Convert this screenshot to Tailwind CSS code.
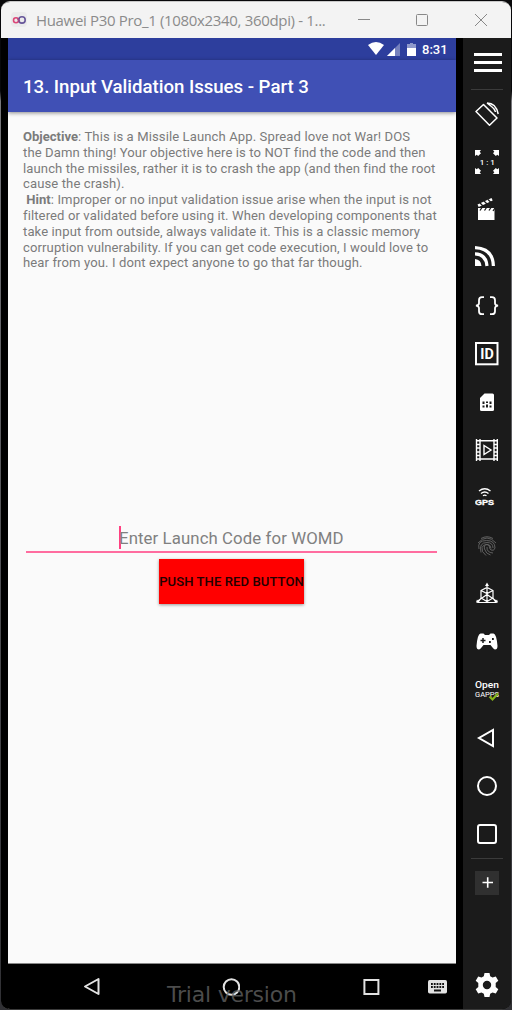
<!DOCTYPE html>
<html lang="en">
<head>
<meta charset="utf-8">
<title>Huawei P30 Pro_1</title>
<script src="https://cdn.jsdelivr.net/npm/@tailwindcss/browser@4"></script>
</head>
<body class="w-[512px] h-[1010px] overflow-hidden bg-[#08080c]">
<div class="w-[512px] h-[1010px] pt-px px-px bg-linear-to-b from-[#08080a] from-9% via-[#77777b] via-10% to-[#303034]">
<div class="relative flex flex-col w-[510px] h-[1009px] overflow-hidden rounded-[9px] bg-black border-t border-b border-t-[#c8c8c8] border-b-[#3a3a3a]">
  <header class="flex items-center h-9 shrink-0 bg-[#f3f3f3] pl-2.5 text-[#8b8b8b]">
    <svg class="w-4 h-4 shrink-0" viewBox="0 0 16 16" fill="none" stroke-width="1.6"><rect width="16" height="15" rx="4" fill="#ebebeb"/><circle cx="5" cy="8.3" r="2.5" stroke="#dc4778"/><circle cx="11" cy="7.9" r="3.2" stroke="#67569a"/><path d="M6.8 6.5 8.5 9.5" stroke="#a34783"/></svg>
    <h1 class="ml-[9px] w-[304px] whitespace-nowrap font-['Open_Sans'] text-[15px] tracking-[-0.33px]">Huawei P30 Pro_1 (1080x2340, 360dpi) - 1...</h1>
    <svg class="ml-[17px] w-3.5 h-3.5" viewBox="0 0 14 14" fill="none" stroke="#888"><path d="M1 6.5h12"/></svg>
    <svg class="ml-[44px] w-3.5 h-3.5" viewBox="0 0 14 14" fill="none" stroke="#888"><rect x="1.5" y="1.5" width="11" height="11" rx="1"/></svg>
    <svg class="ml-[45px] w-3.5 h-3.5" viewBox="0 0 14 14" fill="none" stroke="#888"><path d="m1 1 12 12M13 1 1 13"/></svg>
  </header>
  <div class="flex flex-1 min-h-0">
    <main class="flex flex-col w-[448px] ml-[7px] mr-[7px] shrink-0 font-[Roboto] bg-[#fafafa]">
      <div class="flex items-center justify-end h-[22px] shrink-0 bg-[#2d3e9d] text-white pr-2">
        <svg class="w-4 h-[13px] -mt-px" viewBox="0 0 16 13" fill="#fff"><path d="M0 3Q8-3 16 3L8 13Z"/></svg>
        <svg class="ml-[3px] w-[13px] h-[13px]" viewBox="0 0 13 13"><path d="M0 13 13 0v13Z" fill="#7681bd"/><path d="M0 13 8 5v8Z" fill="#fff"/></svg>
        <svg class="ml-[7px] w-[9px] h-[13px]" viewBox="0 0 9 13" fill="#fff"><path d="M0 5h9v8H0Z"/><path d="M0 1h3V0h3v1h3v4H0Z" fill="#8e98cb"/></svg>
        <span class="ml-[6px] w-[26px] text-[13px] font-medium leading-none whitespace-nowrap">8:31</span>
      </div>
      <div class="relative flex items-center h-[52px] shrink-0 bg-[#4050b5] pl-[15px] pt-0.5 text-white shadow-[0_1px_4px_rgba(0,0,0,0.45)]">
        <h2 class="text-[18.67px] font-medium tracking-[-0.04px] whitespace-nowrap">13. Input Validation Issues - Part 3</h2>
      </div>
      <div class="flex-1 pt-[17px] px-[15px] min-h-0 flex flex-col">
        <p class="h-[397px] shrink-0 whitespace-nowrap text-[13.07px] leading-[15.8px] tracking-[0.108px] text-[#7b7b7b]"><b class="tracking-normal">Objective</b>: This is a Missile Launch App. Spread love not War! DOS<br>the Damn thing! Your objective here is to NOT find the code and then<br>launch the missiles, rather it is to crash the app (and then find the root<br>cause the crash).<br>&nbsp;<b class="tracking-normal">Hint</b>: Improper or no input validation issue arise when the input is not<br>filtered or validated before using it. When developing components that<br>take input from outside, always validate it. This is a classic memory<br>corruption vulnerability. If you can get code execution, I would love to<br>hear from you. I dont expect anyone to go that far though.</p>
        <div class="mx-[3px] w-[411px] h-[27px] flex justify-center border-b-2 border-[#ff6c9f] shrink-0">
          <div class="flex h-[23px] items-center w-[225px] border-l-2 border-[#ff4081] whitespace-nowrap text-[16.8px] tracking-[0.09px] text-[#808080]"><span class="-ml-0.5 pt-0.5">Enter Launch Code for WOMD</span></div>
        </div>
        <button class="mt-[6px] ml-[136px] flex items-center justify-center w-[145px] h-[45px] shrink-0 bg-[#ff0000] text-[#230000] text-[13.07px] font-medium tracking-[0.08px] whitespace-nowrap shadow-[0_1px_3px_rgba(0,0,0,0.4)]">PUSH THE RED BUTTON</button>
      </div>
      <nav class="relative h-[46px] shrink-0 bg-black border-t border-[#888] flex items-center pl-[75px]">
        <svg class="w-[18px] h-[19px]" viewBox="0 0 18 19" fill="none" stroke="#e2e2e2" stroke-width="2" stroke-linejoin="round"><path d="M15.5 2v15L2 9.5Z"/></svg>
        <svg class="ml-[121px] w-[18px] h-[18px]" viewBox="0 0 18 18" fill="none" stroke="#e2e2e2" stroke-width="2"><circle cx="9.5" cy="9" r="7.8"/></svg>
        <svg class="ml-[122px] w-[18px] h-[18px]" viewBox="0 0 18 18" fill="none" stroke="#e2e2e2" stroke-width="2"><rect x="2.4" y="2" width="14" height="14"/></svg>
        <svg class="ml-[48px] w-[19px] h-[14px]" viewBox="0 0 19 14"><rect width="19" height="13.5" rx="1.7" fill="#e2e2e2"/><path d="M3 4h13M3 7h13" stroke="#111" stroke-width="2" stroke-dasharray="1.8 1"/><path d="M6 10.500h7" stroke="#111" stroke-width="2"/></svg>
        <span class="absolute left-[159px] top-[18px] font-['DejaVu_Sans'] text-[22px] leading-[26px] tracking-[-0.22px] whitespace-nowrap text-[#666]/75">Trial version</span>
      </nav>
    </main>
    <aside class="w-12 shrink-0 bg-[#1b1b1b] flex flex-col items-center text-white">
      <svg class="w-7 h-[51px] shrink-0 ml-0.5" viewBox="0 0 28 51" stroke="#fff" stroke-width="3"><path d="M0 16.5h28M0 24.5h28M0 32.5h28"/></svg>
      <div class="w-8 h-px shrink-0 bg-[#3b3b3b]"></div>
      <div class="grid grid-cols-1 auto-rows-[48px] place-items-center">
        <svg class="w-6 h-6" viewBox="0 0 24 24" fill="none" stroke="#fff" stroke-width="1.5" stroke-linejoin="round"><path d="M8.500 2.500 22 16 14.500 23.200 1 9.500Z"/><path d="M12 1q9 0 11.200 11M12 1l4.500 3.500Q20 7 20.500 10"/></svg>
        <svg class="w-6 h-6" viewBox="0 0 24 24" fill="#fff"><path d="M0 0h6L4.700 1.700 6 3.200 3.200 6 1.700 4.700 0 6ZM24 0v6l-1.700-1.300L20.800 6 18 3.200l1.300-1.500L18 0ZM0 24v-6l1.700 1.300L3.200 18 6 20.800l-1.300 1.500L6 24ZM24 24h-6l1.300-1.700-1.300-1.500 2.800-2.800 1.500 1.300L24 18Z"/><text x="12.300" y="14.800" text-anchor="middle" font-family="Roboto" font-size="8" font-weight="500" textLength="15">1 : 1</text></svg>
        <svg class="w-6 h-6" viewBox="0 0 24 24" fill="#fff"><path d="M3 10h16.500v12H3Z"/><path d="m2.500 6.500 14-6.500 1.200 2.500-14 6.500Z"/><path d="m5 5 3 3M9 3l3 3M13 1.500l3 3M7 9.500l-2 3M11.500 9.500l-2 3M16 9.500l-2 3M20 10l-2 3" stroke="#1b1b1b" stroke-width="1.300"/></svg>
        <svg class="w-6 h-6" viewBox="0 0 24 24" fill="none" stroke="#fff" stroke-width="3.200"><path d="M0 1.600Q18 2.500 18.400 20M0 7.800Q11 8 12 20"/><path d="M0 13q6 .5 6.500 7H0Z" fill="#fff" stroke="none"/></svg>
        <svg class="w-6 h-6" viewBox="0 0 24 24" fill="none" stroke="#fff" stroke-width="1.800"><path d="M9 3.200H7q-3 0-3 3v3q0 2-3 2.500 3 .5 3 2.500v3q0 3 3 3h2M15 3.200h2q3 0 3 3v3q0 2 3 2.500-3 .5-3 2.500v3q0 3-3 3h-2"/></svg>
        <svg class="w-6 h-6" viewBox="0 0 24 24"><rect x="1" y="1" width="21.500" height="21.300" fill="none" stroke="#fff" stroke-width="2"/><text x="12" y="17" text-anchor="middle" font-family="Roboto" font-size="15" font-weight="700" fill="#fff" textLength="13.500" lengthAdjust="spacingAndGlyphs">ID</text></svg>
        <svg class="w-6 h-6" viewBox="0 0 24 24" fill="#fff"><path d="M9.500 3.500h8q1.500 0 1.500 1.500v14.500q0 1.500-1.500 1.500h-11Q5 21 5 19.500V8Z"/><path d="M7.500 11.500h2v2.500h-2zM11 11.500h2v1.500h-2zM14.500 11.500h2v2.500h-2zM7.500 15.500h2v2h-2zM11 14.500h2v3h-2zM14.500 15.500h2v2h-2z" fill="#1b1b1b"/></svg>
        <svg class="w-6 h-6" viewBox="0 0 24 24" fill="none" stroke="#fff" stroke-width="1.400"><path d="M1.500 1v22M5 1v22M19 1v22M22.300 1v22M1 2.700h22M1 21h22M9 7.500v9l7-4.500Z"/><path d="M1 6.500h4M1 10h4M1 14h4M1 17.500h4M19 6.500h4M19 10h4M19 14h4M19 17.500h4"/></svg>
        <svg class="w-6 h-6" viewBox="0 0 24 24" fill="none" stroke="#fff" stroke-width="1.400"><path d="M4 5q5.700-4.500 11.500 0M6 7.500q3.700-3 7.500 0M8 9.800q1.700-1.300 3.500 0"/><text x="0" y="18.600" font-family="Liberation Sans" font-weight="700" font-size="8" fill="#fff" stroke="#fff" stroke-width=".35" textLength="19" lengthAdjust="spacingAndGlyphs">GPS</text></svg>
        <svg class="w-6 h-6" viewBox="0 0 24 24" fill="none" stroke="#666" stroke-width=".9"><path d="M6 4.500q6-3.500 12 0M3 9q9-10 18 0M4 15Q2 6.500 11.500 6.500q8.500 0 8.500 7.500-1 3.500-4 2-1.500-1-1.500-3 0-2.500-2.500-2.500-3.500 0-2.500 4.500Q11 20 15.500 21M6 18.500Q3.500 8.500 12 8.500q6 0 6 5.500M11 21.500q-5-4-4-8 1-3 5-3t4 4M12 13q-.5 5.500 6 6"/></svg>
        <svg class="w-6 h-6" viewBox="0 0 24 24" fill="none" stroke="#fff" stroke-width="1.200"><path d="M6 8.500 12 5.500l6 3V16l-6 3.500L6 16ZM6 8.500l6 3 6-3M12 2v17.500M12 12.500 2 19.500M12 12.500l10 7M6 16l-3 4.500h18L18 16"/><path d="m10 4 2-3.500L14 4ZM1 20.500l1-3 2 3ZM23 20.500l-1-3-2 3Z" fill="#fff" stroke="none"/></svg>
        <svg class="w-6 h-6" viewBox="0 0 24 24"><path d="M5.500 3.500h3L10 5h4l1.500-1.500h3Q21.500 4 22.500 16q0 3.500-2.500 3.500-1 0-4.500-4.500h-7Q5 19.500 4 19.500q-2.500 0-2.500-3.500Q2.500 4 5.500 3.500Z" fill="#fff"/><path d="M5.500 10.500h5M8 8v5" stroke="#1b1b1b" stroke-width="1.500"/><path d="M14 12h1.800M17 9h1.800" stroke="#1b1b1b" stroke-width="1.800"/></svg>
        <svg class="w-6 h-6 overflow-visible" viewBox="0 0 24 24" fill="#fff" font-family="Roboto"><text x="0" y="10.400" font-size="9.500" font-weight="500" textLength="24" lengthAdjust="spacingAndGlyphs">Open</text><text x="0" y="19.300" font-size="7" font-weight="400" textLength="24" lengthAdjust="spacingAndGlyphs">GAPPS</text><path d="m14.500 18.500 3 3 5.500-6" fill="none" stroke="#89b51b" stroke-width="2.200"/></svg>
        <svg class="w-6 h-6" viewBox="0 0 24 24" fill="none" stroke="#fff" stroke-width="2"><path d="M18 4v16L4 12Z"/></svg>
        <svg class="w-6 h-6" viewBox="0 0 24 24" fill="none" stroke="#fff" stroke-width="2"><circle cx="12" cy="12" r="9"/></svg>
        <svg class="w-6 h-6" viewBox="0 0 24 24" fill="none" stroke="#fff" stroke-width="2"><rect x="3" y="3" width="18" height="18" rx="2"/></svg>
      </div>
      <div class="w-8 h-px shrink-0 bg-[#3b3b3b]"></div>
      <svg class="mt-3 w-6 h-6 bg-[#303030] shrink-0" viewBox="0 0 24 24" stroke="#fff" stroke-width="1.600"><path d="M7.500 11.500h10.500M12.700 6.300v10.500"/></svg>
      <svg class="mt-auto mb-3 w-6 h-6 shrink-0" viewBox="0 0 24 24" fill="#fff"><path fill-rule="evenodd" d="M9.500 0h5l.7 3.300 2.300 1.300 3.300-1.100 2.500 4.200-2.600 2.300v4l2.600 2.300-2.500 4.200-3.300-1.100-2.300 1.300-.7 3.300h-5l-.7-3.300-2.300-1.300-3.300 1.100L.7 16.300 3.300 14v-4L.7 7.700l2.500-4.200 3.300 1.100 2.300-1.300ZM12 7.800a4.200 4.200 0 1 0 0 8.400 4.200 4.200 0 0 0 0-8.400Z"/></svg>
    </aside>
  </div>
</div>
</div>
</body>
</html>
